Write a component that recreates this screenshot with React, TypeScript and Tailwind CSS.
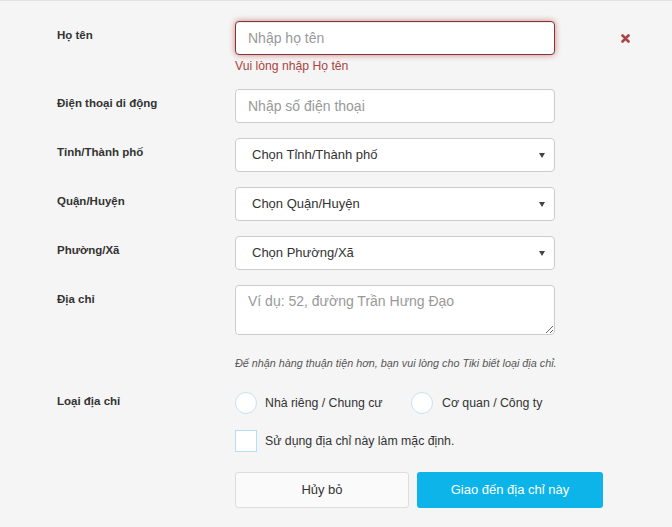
import type { ReactNode } from 'react'

function Row({ label, children, className = '' }: { label: string; children: ReactNode; className?: string }) {
  return (
    <div className={`flex items-start ${className}`}>
      <div className="w-[235px] shrink-0 pl-[57px] pt-[5px] text-[11.5px] leading-[18px] font-bold text-[#333]">
        {label}
      </div>
      {children}
    </div>
  )
}

function FakeSelect({ text }: { text: string }) {
  return (
    <div className="w-[320px] h-[34px] bg-white border border-[#ccc] rounded-[4px] flex items-center justify-between pl-[16px] pr-[8px] text-[13px] text-[#333]">
      <span>{text}</span>
      <svg width="6" height="5" viewBox="0 0 6 5" className="mr-[1px]">
        <path d="M0 0 L6 0 L3 5 Z" fill="#444" />
      </svg>
    </div>
  )
}

export default function App() {
  return (
    <div className="min-h-[527px] bg-[#f5f5f5] border-t border-[#e2e2e2] pt-[20px] font-['Liberation_Sans',Arial,sans-serif]">
      {/* Name */}
      <Row label="Họ tên" className="mb-[15px]">
        <div className="w-[320px]">
          <input
            placeholder="Nhập họ tên"
            className="w-full h-[34px] bg-white border border-[#843534] rounded-[4px] px-[12px] text-[14px] text-[#333] placeholder:text-[#999] outline-none shadow-[inset_0_1px_1px_rgba(0,0,0,0.075),0_0_6px_#ce8483]"
          />
          <div className="mt-[3px] text-[12.2px] leading-[16px] text-[#a94442]">Vui lòng nhập Họ tên</div>
        </div>
        <svg width="9" height="9" viewBox="0 0 9 9" className="ml-[66px] mt-[13px]">
          <path d="M1.5 1.5 L7.5 7.5 M7.5 1.5 L1.5 7.5" stroke="#a94442" strokeWidth="2.6" strokeLinecap="round" />
        </svg>
      </Row>

      <Row label="Điện thoại di động" className="mb-[15px]">
        <input
          placeholder="Nhập số điện thoại"
          className="w-[320px] h-[34px] bg-white border border-[#ccc] rounded-[4px] px-[12px] text-[14px] text-[#333] placeholder:text-[#999] outline-none"
        />
      </Row>

      <Row label="Tỉnh/Thành phố" className="mb-[15px]">
        <FakeSelect text="Chọn Tỉnh/Thành phố" />
      </Row>

      <Row label="Quận/Huyện" className="mb-[15px]">
        <FakeSelect text="Chọn Quận/Huyện" />
      </Row>

      <Row label="Phường/Xã" className="mb-[15px]">
        <FakeSelect text="Chọn Phường/Xã" />
      </Row>

      <Row label="Địa chỉ">
        <textarea
          placeholder="Ví dụ: 52, đường Trần Hưng Đạo"
          className="block w-[320px] h-[50px] bg-white border border-[#ccc] rounded-[4px] px-[12px] py-[5px] text-[14px] leading-[20px] text-[#333] placeholder:text-[#999] outline-none"
        />
      </Row>

      <div className="pl-[235px] mt-[20px] text-[10.8px] leading-[16px] italic text-[#555]">
        Để nhận hàng thuận tiện hơn, bạn vui lòng cho Tiki biết loại địa chỉ.
      </div>

      <div className="flex items-start mt-[21px]">
        <div className="w-[235px] shrink-0 pl-[57px] text-[11.5px] leading-[18px] font-bold text-[#333]">
          Loại địa chỉ
        </div>
        <div>
          <div className="flex items-center text-[12.3px] text-[#333]">
            <label className="w-[176px] flex items-center gap-2">
              <span className="w-[22px] h-[22px] rounded-full border border-[#c6e3f0] bg-white" />
              Nhà riêng / Chung cư
            </label>
            <label className="flex items-center gap-[9px]">
              <span className="w-[22px] h-[22px] rounded-full border border-[#c6e3f0] bg-white" />
              Cơ quan / Công ty
            </label>
          </div>
          <label className="mt-[16px] flex items-center gap-2 text-[12.3px] text-[#333]">
            <span className="w-[22px] h-[22px] border border-[#b7dff0] bg-white" />
            Sử dụng địa chỉ này làm mặc định.
          </label>
          <div className="mt-[20px] flex gap-2">
            <button className="w-[174px] h-[36px] bg-[#fafafa] border border-[#ddd] rounded-[3px] text-[13px] text-[#333]">
              Hủy bỏ
            </button>
            <button className="w-[186px] h-[36px] bg-[#0cb4ea] rounded-[3px] text-[13px] text-white">
              Giao đến địa chỉ này
            </button>
          </div>
        </div>
      </div>
    </div>
  )
}
